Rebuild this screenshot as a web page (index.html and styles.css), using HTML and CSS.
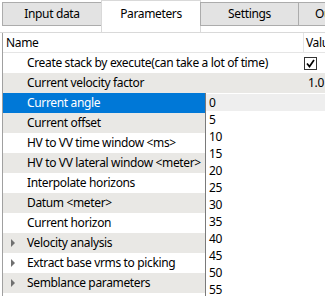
FILE: index.html
```html
<!DOCTYPE html>
<html lang="en">
<head>
    <title>Parameters</title>
    <link rel="stylesheet" href="styles.css">
</head>
<body>
    <div class="tabs">
        <div class="tab">Input data</div>
        <div class="tab active">Parameters</div>
        <div class="tab settings">Settings</div>
        <div class="tab last">Output</div>
    </div>
    <div class="pane">
        <div class="grid">
            <div class="row head">
                <div class="name">Name</div>
                <div class="value">Value</div>
            </div>
            <div class="row">
                <div class="name">Create stack by execute(can take a lot of time)</div>
                <div class="value">
                    <span class="check">
                        <svg width="11" height="11" viewBox="0 0 11 11"><polyline points="2,5.5 4.5,8.5 9,2" fill="none" stroke="#000" stroke-width="1.7"/></svg>
                    </span>
                </div>
            </div>
            <div class="row alt">
                <div class="name">Current velocity factor</div>
                <div class="value">1.0</div>
            </div>
            <div class="row selected">
                <div class="name">Current angle</div>
                <div class="value">0</div>
            </div>
            <div class="row alt">
                <div class="name">Current offset</div>
                <div class="value"></div>
            </div>
            <div class="row">
                <div class="name">HV to VV time window &lt;ms&gt;</div>
                <div class="value"></div>
            </div>
            <div class="row alt">
                <div class="name">HV to VV lateral window &lt;meter&gt;</div>
                <div class="value"></div>
            </div>
            <div class="row">
                <div class="name">Interpolate horizons</div>
                <div class="value"></div>
            </div>
            <div class="row alt">
                <div class="name">Datum &lt;meter&gt;</div>
                <div class="value"></div>
            </div>
            <div class="row">
                <div class="name">Current horizon</div>
                <div class="value"></div>
            </div>
            <div class="row alt">
                <div class="name group"><span class="arrow"></span>Velocity analysis</div>
                <div class="value"></div>
            </div>
            <div class="row">
                <div class="name group"><span class="arrow"></span>Extract base vrms to picking</div>
                <div class="value"></div>
            </div>
            <div class="row alt">
                <div class="name group"><span class="arrow"></span>Semblance parameters</div>
                <div class="value"></div>
            </div>
            <div class="row">
                <div class="name"></div>
                <div class="value"></div>
            </div>
        </div>

        <!-- open combo list of "Current angle" -->
        <ul class="dropdown">
            <li class="hover">0</li>
            <li>5</li>
            <li>10</li>
            <li>15</li>
            <li>20</li>
            <li>25</li>
            <li>30</li>
            <li>35</li>
            <li>40</li>
            <li>45</li>
            <li>50</li>
            <li>55</li>
        </ul>
    </div>
</body>
</html>
```

FILE: styles.css
```css
body {
    font-family: "Noto Sans", Arial, sans-serif;
    font-size: 12px;
    letter-spacing: -0.35px;
    color: #000;
    margin: 0;
    padding: 0;
    background-color: #fff;
    overflow: hidden;
    height: 296px;
}
.tabs {
    display: flex;
    align-items: flex-start;
    height: 32px;
    padding-left: 2px;
}
.tab {
    flex: none;
    box-sizing: border-box;
    width: 100px;
    height: 24px;
    margin-top: 2px;
    border: 1px solid #acacac;
    background-color: #e3e3e3;
    text-align: center;
    line-height: 22px;
    white-space: nowrap;
    overflow: hidden;
}
.tab.active {
    margin-left: -1px;
    margin-top: 0;
    height: 32px;
    line-height: 26px;
    background-color: #fff;
    border-color: #d9d9d9;
    border-bottom: none;
}
.tab.settings {
    margin-left: -1px;
    width: 99px;
}
.tab.last {
    margin-left: -1px;
    width: 40px;
    text-align: left;
    padding-left: 16px;
}
.pane {
    position: relative;
    border-top: 1px solid #d9d9d9;
    padding-left: 2px;
    height: 263px;
    overflow: hidden;
}
.grid {
    border-left: 1px solid #a0a0a0;
    height: 100%;
}
.row {
    display: flex;
    height: 20px;
    line-height: 20px;
    white-space: nowrap;
}
.row.alt {
    background-color: #e9e8e5;
}
.row.selected {
    background-color: #0078d7;
    color: #fff;
}
.row.head {
    height: 19px;
    line-height: 19px;
    border-bottom: 1px solid #e5e5e5;
    background-color: #fff;
}
.name {
    width: 300px;
    flex: none;
    padding-left: 24px;
    box-sizing: border-box;
    overflow: hidden;
}
.head .name {
    padding-left: 3px;
}
.head .value {
    border-left: 1px solid #e5e5e5;
    padding-left: 2px;
}
.name.group {
    display: flex;
    align-items: center;
    padding-left: 8px;
}
.arrow {
    width: 0;
    height: 0;
    border-style: solid;
    border-width: 4px 0 4px 4px;
    border-color: transparent transparent transparent #707070;
    margin-right: 12px;
}
.value {
    flex: 1;
    padding-left: 5px;
    overflow: hidden;
}
.check {
    display: flex;
    align-items: center;
    justify-content: center;
    box-sizing: border-box;
    width: 13px;
    height: 13px;
    margin-top: 4px;
    margin-left: -4px;
    border: 1px solid #333;
    background-color: #fff;
}
.dropdown {
    position: absolute;
    left: 205px;
    top: 60px;
    width: 120px;
    height: 220px;
    margin: 0;
    padding: 1px 0 0 0;
    list-style: none;
    background-color: #fff;
    border-left: 1px solid #7a7a7a;
}
.dropdown li {
    height: 17px;
    line-height: 17px;
    padding-left: 3px;
}
.dropdown li.hover {
    background-color: #eeeeee;
}
```
